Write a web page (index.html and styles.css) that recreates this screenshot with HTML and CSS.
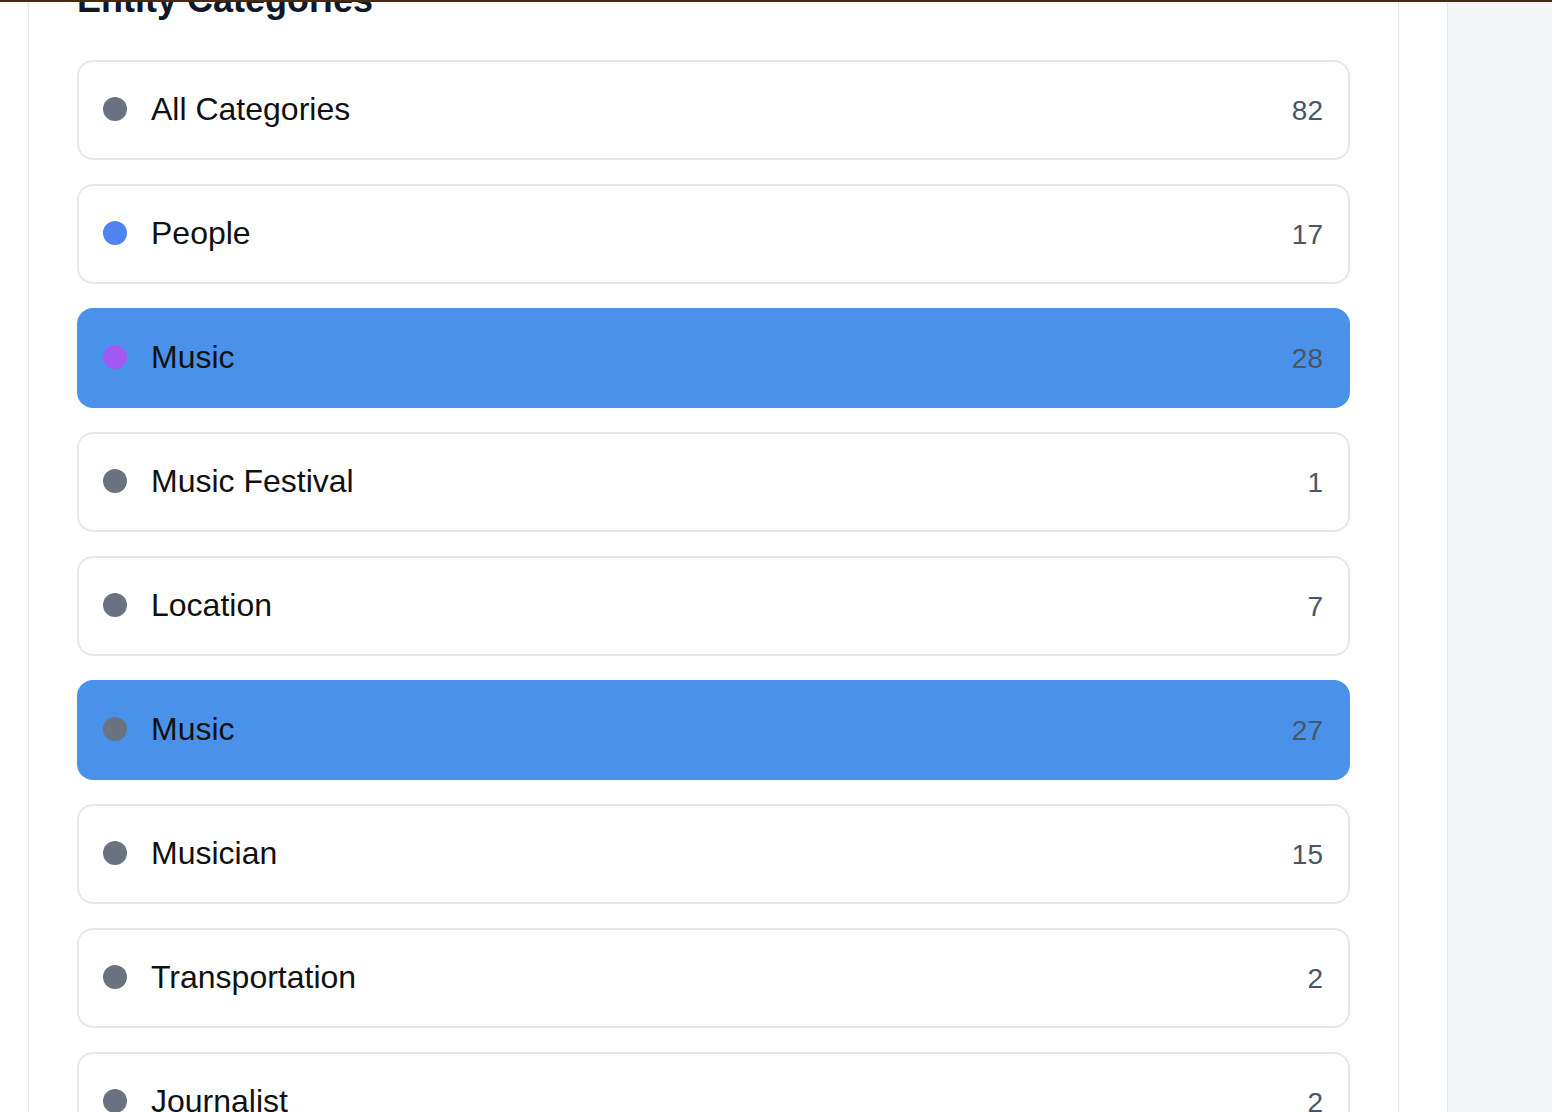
FILE: index.html
```html
<!DOCTYPE html>
<html lang="en">
<head>
<meta charset="utf-8">
<title>Entity Categories</title>
<link rel="stylesheet" href="styles.css">
</head>
<body>
<div class="topbar"></div>
<div class="layout">
  <main class="main">
    <section class="panel">
      <h2 class="panel-title">Entity Categories</h2>
      <ul class="cat-list">
        <li class="cat"><span class="dot dot-gray"></span><span class="cat-name">All Categories</span><span class="cat-count">82</span></li>
        <li class="cat"><span class="dot dot-blue"></span><span class="cat-name">People</span><span class="cat-count">17</span></li>
        <li class="cat cat-active"><span class="dot dot-purple"></span><span class="cat-name">Music</span><span class="cat-count">28</span></li>
        <li class="cat"><span class="dot dot-gray"></span><span class="cat-name">Music Festival</span><span class="cat-count">1</span></li>
        <li class="cat"><span class="dot dot-gray"></span><span class="cat-name">Location</span><span class="cat-count">7</span></li>
        <li class="cat cat-active"><span class="dot dot-gray"></span><span class="cat-name">Music</span><span class="cat-count">27</span></li>
        <li class="cat"><span class="dot dot-gray"></span><span class="cat-name">Musician</span><span class="cat-count">15</span></li>
        <li class="cat"><span class="dot dot-gray"></span><span class="cat-name">Transportation</span><span class="cat-count">2</span></li>
        <li class="cat"><span class="dot dot-gray"></span><span class="cat-name">Journalist</span><span class="cat-count">2</span></li>
      </ul>
    </section>
  </main>
  <aside class="sidebar"></aside>
</div>
</body>
</html>
```
FILE: styles.css
```css
* { box-sizing: border-box; }
html, body { margin: 0; padding: 0; }
body {
  font-family: "Liberation Sans", Arial, sans-serif;
  background: #ffffff;
  height: 1112px;
  overflow: hidden;
}
.topbar {
  height: 2px;
  background: #4a2a0a;
}
.layout {
  display: flex;
  height: 1110px;
  overflow: hidden;
}
.main {
  width: 1448px;
  flex: none;
  background: #ffffff;
  border-right: 1px solid #e5e7eb;
  padding: 0 48px 0 28px;
  overflow: hidden;
}
.sidebar {
  flex: 1;
  background: #f3f6f9;
}
.panel {
  width: 1371px;
  margin-top: -71px;
  background: #ffffff;
  border: 1px solid #e5e7eb;
  border-radius: 16px;
  box-shadow: 0 1px 3px rgba(0,0,0,0.08);
  padding: 48px;
}
.panel-title {
  margin: 0 0 40px 0;
  font-size: 36px;
  line-height: 40px;
  font-weight: 700;
  color: #111827;
}
.cat-list {
  list-style: none;
  margin: 0;
  padding: 0;
  display: flex;
  flex-direction: column;
  gap: 24px;
}
.cat {
  display: flex;
  align-items: center;
  gap: 24px;
  height: 100px;
  padding: 0 25px 2px 24px;
  border: 2px solid #e5e7eb;
  border-radius: 16px;
  background: #ffffff;
}
.cat-active {
  background: #4a92e9;
  border-color: #4a92e9;
}
.dot {
  width: 24px;
  height: 24px;
  border-radius: 50%;
  flex: none;
}
.dot-gray { background: #6b7280; }
.dot-blue { background: #4f83ef; }
.dot-purple { background: #a259f2; }
.cat-name {
  flex: 1;
  font-size: 32px;
  line-height: 48px;
  color: #111111;
}
.cat-count {
  margin-top: 4px;
  font-size: 28px;
  line-height: 40px;
  color: #4b5563;
}
```
